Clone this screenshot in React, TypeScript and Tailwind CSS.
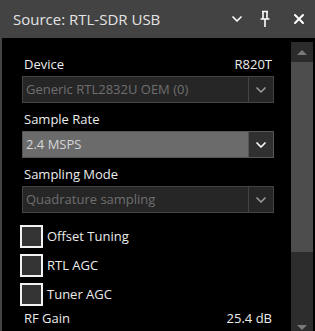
import { ChevronDown, X } from "lucide-react";

const font = { fontFamily: '"Open Sans", "Noto Sans", sans-serif' };

function Combo({ value, active }: { value: string; active?: boolean }) {
  return (
    <div
      className={`flex h-[27px] w-[252px] border ${
        active ? "border-[#555555] bg-[#6b6b6b]" : "border-[#444444] bg-[#262626]"
      }`}
    >
      <div
        className={`flex flex-1 items-center pl-[3px] text-[13px] ${
          active ? "text-[#d6d6d6]" : "text-[#6f6f6f]"
        }`}
      >
        {value}
      </div>
      <div
        className={`flex w-[25px] items-center justify-center border-l ${
          active ? "border-[#555555] bg-[#303030] text-white" : "border-[#444444] text-[#9a9a9a]"
        }`}
      >
        <ChevronDown size={16} strokeWidth={2.5} />
      </div>
    </div>
  );
}

function Check({ label }: { label: string }) {
  return (
    <div className="flex h-[23px] items-center gap-[4px]">
      <div className="h-[23px] w-[23px] border-2 border-[#f2f2f2] bg-[#333333]" />
      <span className="text-[13px] text-[#ececec]">{label}</span>
    </div>
  );
}

export default function App() {
  return (
    <div className="flex h-[331px] w-[315px] flex-col overflow-hidden bg-[#434343]" style={font}>
      {/* Title bar */}
      <div className="flex h-[38px] shrink-0 items-center pl-[13px] pr-[8px]">
        <span className="flex-1 text-[15px] text-[#e4e4e4]">Source: RTL-SDR USB</span>
        <ChevronDown size={16} strokeWidth={2.5} className="mr-[14px] text-white" />
        <svg width="12" height="18" viewBox="0 0 12 18" className="mr-[20px]">
          <path d="M3 1.5h6M4 1.5v7M8 1.5v7M1.5 9h9M6 9v8" stroke="#ffffff" strokeWidth="1.6" fill="none" />
        </svg>
        <X size={16} strokeWidth={3} className="text-white" />
      </div>

      {/* Body */}
      <div className="ml-[2px] flex flex-1 bg-black">
        <div className="flex-1 pl-[20px] pt-[18px]">
          <div className="flex h-[17px] w-[252px] items-center justify-between px-[2px] text-[13px] leading-[17px] text-[#ececec]">
            <span>Device</span>
            <span>R820T</span>
          </div>
          <div className="mt-[3px]">
            <Combo value="Generic RTL2832U OEM (0)" />
          </div>
          <div className="mt-[8px] h-[17px] px-[2px] text-[13px] leading-[17px] text-[#ececec]">Sample Rate</div>
          <div className="mt-[3px]">
            <Combo value="2.4 MSPS" active />
          </div>
          <div className="mt-[8px] h-[17px] px-[2px] text-[13px] leading-[17px] text-[#ececec]">Sampling Mode</div>
          <div className="mt-[3px]">
            <Combo value="Quadrature sampling" />
          </div>
          <div className="ml-[-2px] mt-[12px] flex flex-col gap-[6px]">
            <Check label="Offset Tuning" />
            <Check label="RTL AGC" />
            <Check label="Tuner AGC" />
          </div>
          <div className="mt-[4px] flex h-[17px] w-[252px] items-center justify-between px-[2px] text-[13px] leading-[17px] text-[#ececec]">
            <span>RF Gain</span>
            <span>25.4 dB</span>
          </div>
        </div>

        {/* Scrollbar */}
        <div className="mr-[2px] mt-[4px] flex w-[22px] flex-col bg-[#2d2d2d]">
          <div className="flex h-[20px] items-center justify-center bg-[#2b2b2b]">
            <div className="h-0 w-0 border-x-[5px] border-b-[5px] border-x-transparent border-b-[#7a7a7a]" />
          </div>
          <div className="h-[190px] bg-[#4d4d4d]" />
          <div className="flex flex-1 items-end justify-center pb-[1px]">
            <div className="h-0 w-0 border-x-[5px] border-t-[5px] border-x-transparent border-t-[#7a7a7a]" />
          </div>
        </div>
      </div>
    </div>
  );
}
